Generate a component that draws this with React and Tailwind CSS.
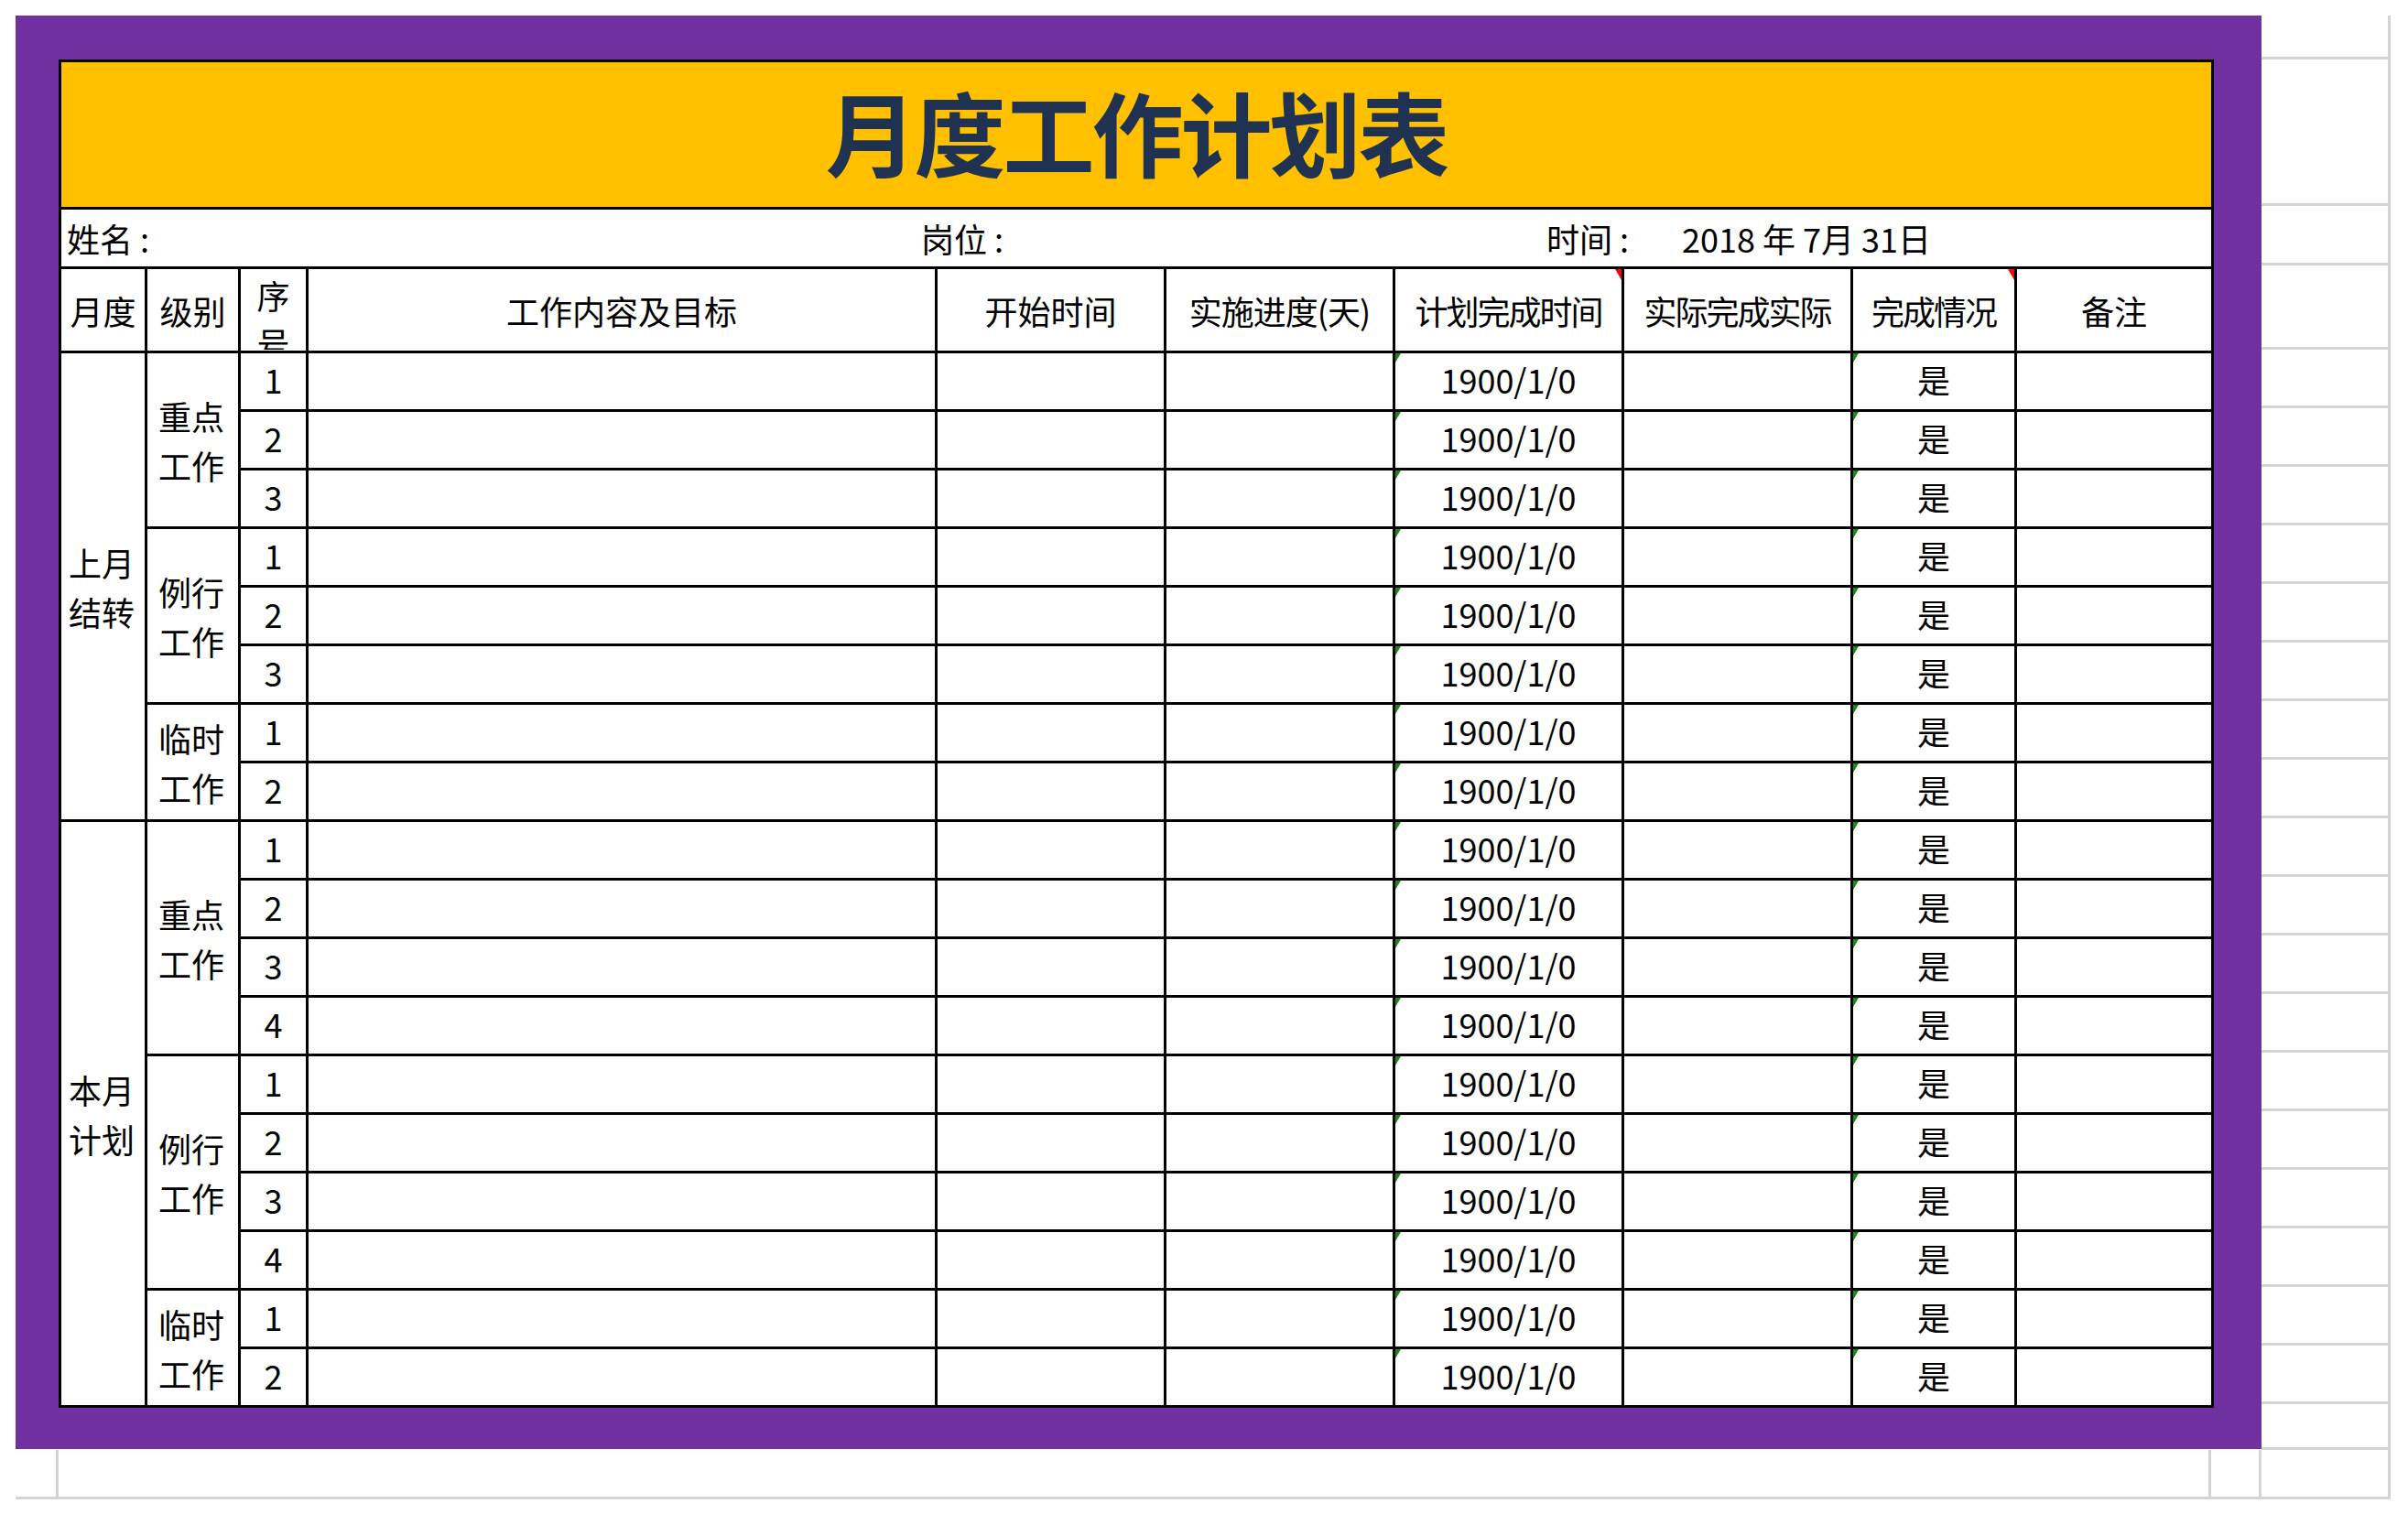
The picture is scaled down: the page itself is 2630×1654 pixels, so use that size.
const cols = [94, 102, 74, 687, 250, 250, 250, 250, 179, 215];

const groups = [
  { month: '上月\n结转', levels: [{ name: '重点\n工作', n: 3 }, { name: '例行\n工作', n: 3 }, { name: '临时\n工作', n: 2 }] },
  { month: '本月\n计划', levels: [{ name: '重点\n工作', n: 4 }, { name: '例行\n工作', n: 4 }, { name: '临时\n工作', n: 2 }] },
];

const td = 'border-[3px] border-black p-0 align-middle text-center';

function Green() {
  return <span className="absolute left-0 top-0 w-0 h-0 border-t-[10px] border-t-[#1a8a1a] border-r-[6px] border-r-transparent" />;
}
function Red() {
  return <span className="absolute right-0 top-0 w-0 h-0 border-t-[12px] border-t-[#ff0000] border-l-[7px] border-l-transparent" />;
}

export default function App() {
  const rows = [];
  groups.forEach((g, gi) => {
    const total = g.levels.reduce((a, l) => a + l.n, 0);
    g.levels.forEach((l, li) => {
      for (let i = 0; i < l.n; i++) {
        rows.push(
          <tr key={`${gi}-${li}-${i}`} className="h-[64px]">
            {li === 0 && i === 0 && (
              <td rowSpan={total} className={`${td} text-left pl-[8px] whitespace-pre-line leading-[54px]`}>{g.month}</td>
            )}
            {i === 0 && (
              <td rowSpan={l.n} className={`${td} text-left pl-[12px] whitespace-pre-line leading-[54px]`}>{l.name}</td>
            )}
            <td className={`${td} pb-[6px]`}>{i + 1}</td>
            <td className={td}></td>
            <td className={td}></td>
            <td className={td}></td>
            <td className={`${td} relative pb-[6px]`}><Green />1900/1/0</td>
            <td className={td}></td>
            <td className={`${td} relative pb-[6px]`}><Green />是</td>
            <td className={td}></td>
          </tr>
        );
      }
    });
  });

  const stripHeights = [48, 160, 65, 92, ...Array(18).fill(64), 50];

  return (
    <div className="w-[2630px] h-[1654px] bg-white pt-[17px] pl-[17px]" style={{ fontFamily: '"Noto Sans CJK SC", "Noto Sans", sans-serif' }}>
      <div className="flex">
        <div className="w-[2453px] h-[1566px] bg-[#7030a0] pt-[48px] pl-[47px]">
          <table className="border-collapse bg-white table-fixed text-[36px] text-black" style={{ width: 2351 }}>
            <colgroup>
              {cols.map((w, i) => <col key={i} style={{ width: w }} />)}
            </colgroup>
            <tbody>
              <tr className="h-[160px]">
                <td colSpan={10} className={`${td} bg-[#ffc000] text-[100px] font-bold text-[#1f3251] tracking-[-3px] pb-[8px]`}>月度工作计划表</td>
              </tr>
              <tr className="h-[65px]">
                <td colSpan={10} className={`${td} text-left`}>
                  <div className="flex items-center h-[60px] pl-[6px]">
                    <span className="w-[933px]">姓名 :</span>
                    <span className="w-[683px]">岗位 :</span>
                    <span className="w-[148px]">时间 :</span>
                    <span>2018 年 7月 31日</span>
                  </div>
                </td>
              </tr>
              <tr className="h-[92px]">
                <td className={td}>月度</td>
                <td className={td}>级别</td>
                <td className={`${td} leading-[52px] overflow-hidden`}><div className="h-[86px] overflow-hidden">序<br />号</div></td>
                <td className={td}>工作内容及目标</td>
                <td className={td}>开始时间</td>
                <td className={`${td} tracking-[-1px]`}>实施进度(天)</td>
                <td className={`${td} relative tracking-[-2px]`}><Red />计划完成时间</td>
                <td className={`${td} tracking-[-2px]`}>实际完成实际</td>
                <td className={`${td} relative tracking-[-2px]`}><Red />完成情况</td>
                <td className={td}>备注</td>
              </tr>
              {rows}
            </tbody>
          </table>
        </div>
        <div className="w-[141px] flex flex-col">
          {stripHeights.map((h, i) => (
            <div key={i} className="border-b-[3px] border-[#d4d4d4] border-r-[3px]" style={{ height: h }} />
          ))}
        </div>
      </div>
      <div className="flex h-[54px] w-[2594px] border-b-[3px] border-[#d4d4d4]">
        <div className="w-[47px] border-r-[3px] border-[#d4d4d4]" />
        <div className="w-[2351px] border-r-[3px] border-[#d4d4d4]" />
        <div className="w-[55px] border-r-[3px] border-[#d4d4d4]" />
        <div className="w-[141px] border-r-[3px] border-[#d4d4d4]" />
      </div>
    </div>
  );
}
